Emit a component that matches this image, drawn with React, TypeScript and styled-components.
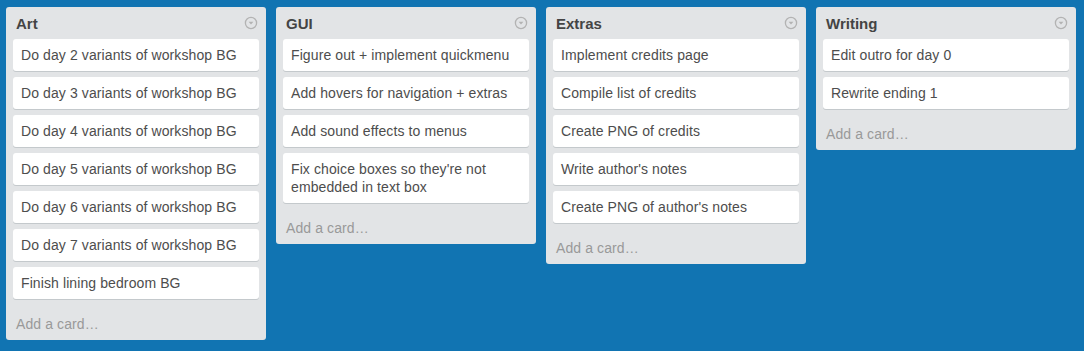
import React from "react";
import styled, { createGlobalStyle } from "styled-components";

const Global = createGlobalStyle`
  html, body { margin: 0; padding: 0; }
  body {
    background: #1174b2;
    font-family: "Liberation Sans", Arial, sans-serif;
    height: 351px;
    overflow: hidden;
  }
`;

const Board = styled.div`
  display: flex;
  align-items: flex-start;
  gap: 10px;
  padding: 7px 6px;
`;

const List = styled.section`
  width: 260px;
  box-sizing: border-box;
  background: #e2e4e6;
  border-radius: 3px;
  padding: 0 7px;
  display: flex;
  flex-direction: column;
`;

const Header = styled.div`
  height: 32px;
  display: flex;
  align-items: center;
  justify-content: space-between;
  padding: 0 1px 0 3px;
`;

const Title = styled.h2`
  margin: 0;
  font-size: 15px;
  font-weight: bold;
  color: #444;
`;

const Cards = styled.div`
  display: flex;
  flex-direction: column;
  gap: 6px;
`;

const Card = styled.div`
  background: #fff;
  border-radius: 3px;
  box-shadow: 0 1px 0 #c4c9cc;
  padding: 7px 8px;
  font-size: 14px;
  line-height: 18px;
  letter-spacing: 0.1px;
  color: #4d4d4d;
`;

const AddCard = styled.div`
  height: 33px;
  margin-top: 8px;
  display: flex;
  align-items: center;
  padding-left: 3px;
  font-size: 14px;
  letter-spacing: 0.1px;
  color: #999;
`;

const MenuIcon = () => (
  <svg width="14" height="14" viewBox="0 0 14 14">
    <circle cx="7" cy="7" r="5.6" fill="none" stroke="#b3b3b3" strokeWidth="1.3" />
    <path d="M4.6 5.8 L9.4 5.8 L7 8.6 Z" fill="#b3b3b3" />
  </svg>
);

const lists = [
  {
    title: "Art",
    cards: [
      "Do day 2 variants of workshop BG",
      "Do day 3 variants of workshop BG",
      "Do day 4 variants of workshop BG",
      "Do day 5 variants of workshop BG",
      "Do day 6 variants of workshop BG",
      "Do day 7 variants of workshop BG",
      "Finish lining bedroom BG",
    ],
  },
  {
    title: "GUI",
    cards: [
      "Figure out + implement quickmenu",
      "Add hovers for navigation + extras",
      "Add sound effects to menus",
      "Fix choice boxes so they're not embedded in text box",
    ],
  },
  {
    title: "Extras",
    cards: [
      "Implement credits page",
      "Compile list of credits",
      "Create PNG of credits",
      "Write author's notes",
      "Create PNG of author's notes",
    ],
  },
  {
    title: "Writing",
    cards: ["Edit outro for day 0", "Rewrite ending 1"],
  },
];

export default function App() {
  return (
    <>
      <Global />
      <Board>
        {lists.map((l) => (
          <List key={l.title}>
            <Header>
              <Title>{l.title}</Title>
              <MenuIcon />
            </Header>
            <Cards>
              {l.cards.map((c) => (
                <Card key={c}>{c}</Card>
              ))}
            </Cards>
            <AddCard>Add a card…</AddCard>
          </List>
        ))}
      </Board>
    </>
  );
}
